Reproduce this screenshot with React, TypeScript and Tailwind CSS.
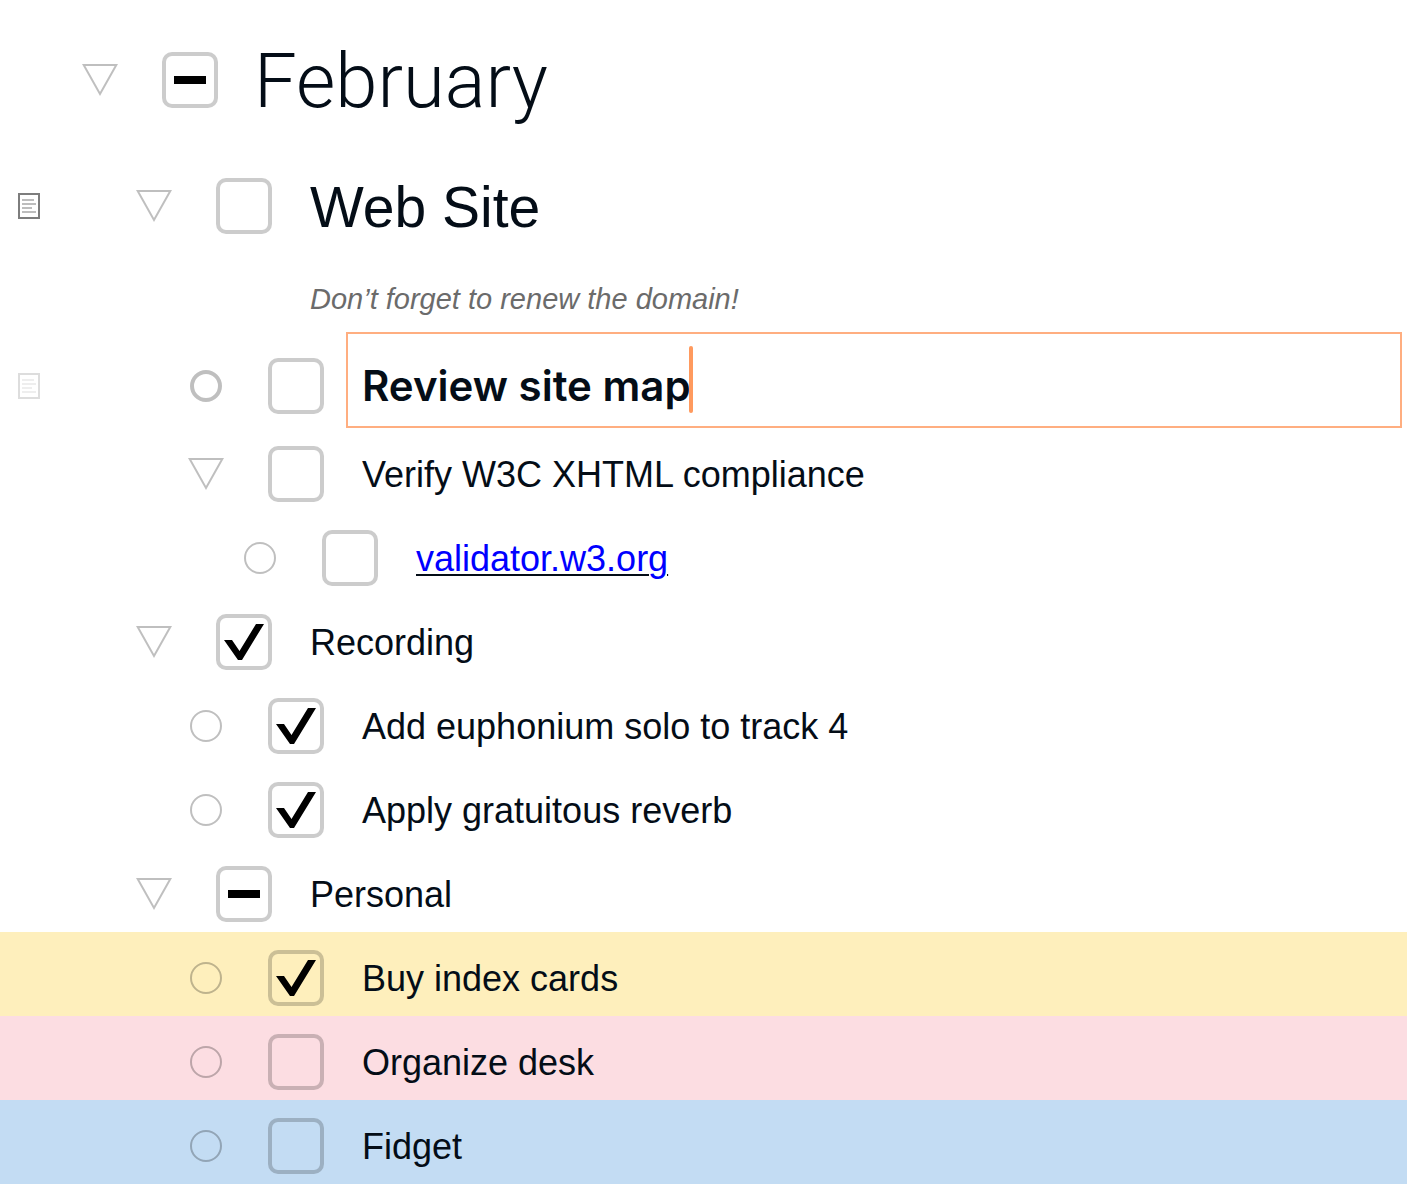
import React from "react";

type Mark = "none" | "check" | "dash";
type Bullet = "open" | "leaf" | "bold";

function NoteIcon({ faded }: { faded?: boolean }) {
  return (
    <svg
      width="22"
      height="26"
      viewBox="0 0 22 26"
      className={faded ? "opacity-25" : ""}
      fill="none"
      strokeWidth="2"
      aria-hidden="true"
    >
      <rect x="1" y="1" width="20" height="24" stroke="#7d7d7d" />
      <path d="M4 7h12M4 11h14M4 15h10M4 19h14" stroke="#bdbdbd" />
    </svg>
  );
}

function Box({ id, mark }: { id: string; mark: Mark }) {
  return (
    <span className="relative block size-14 shrink-0">
      <input
        id={id}
        type="checkbox"
        defaultChecked={mark === "check"}
        className="block size-14 appearance-none rounded-[10px] border-4 border-black/20"
      />
      {mark !== "none" && (
        <svg
          viewBox="0 0 56 56"
          className="pointer-events-none absolute inset-0 size-14"
          aria-hidden="true"
        >
          <path
            d={mark === "check" ? "M8 26h8l7.5 11L40 10h8L26 46h-4z" : "M12 24h32v8H12z"}
            fill="#000"
          />
        </svg>
      )}
    </span>
  );
}

function Handle({ kind, name }: { kind: Bullet; name: string }) {
  return (
    <button type="button" aria-label={name} className="block size-9 shrink-0">
      <svg
        viewBox="0 0 36 36"
        className="size-9"
        fill="none"
        stroke="#000"
        strokeOpacity="0.25"
        aria-hidden="true"
      >
        {kind === "open" && <path d="M1.7 3h32.6L18 32z" strokeWidth="2" />}
        {kind === "leaf" && <circle cx="18" cy="18" r="15" strokeWidth="2" />}
        {kind === "bold" && <circle cx="18" cy="18" r="14" strokeWidth="4" />}
      </svg>
    </button>
  );
}

interface RowProps {
  id: string;
  name: string;
  indent: string;
  size?: string;
  tint?: string;
  bullet: Bullet;
  mark?: Mark;
  note?: "solid" | "faded";
  children?: React.ReactNode;
}

function Row({
  id,
  name,
  indent,
  size = "h-21 pt-2",
  tint = "",
  bullet,
  mark = "none",
  note,
  children,
}: RowProps) {
  return (
    <li className={`flex items-center ${size} ${tint}`}>
      <span className="flex w-10 shrink-0 justify-end">
        {note && <NoteIcon faded={note === "faded"} />}
      </span>
      <div className={`flex min-w-0 flex-1 items-center ${indent}`}>
        <Handle kind={bullet} name={`Handle for ${name}`} />
        <span className="w-11 shrink-0" />
        <Box id={id} mark={mark} />
        {children ?? (
          <label htmlFor={id} className="ml-[38px] pt-0.5 whitespace-nowrap text-4xl">
            {name}
          </label>
        )}
      </div>
    </li>
  );
}

const level1 = "pl-[42px]";
const level2 = "pl-[96px]";
const level3 = "pl-[148px]";
const level4 = "pl-[202px]";

export default function App() {
  return (
    <main className="min-h-screen bg-white pt-8 font-['Liberation_Sans',Arial,sans-serif] text-[#040d17]">
      <ul>
        <Row id="february" name="February" indent={level1} size="h-24" bullet="open" mark="dash">
          <label
            htmlFor="february"
            className="ml-9 pt-0.5 whitespace-nowrap font-['Roboto',sans-serif] text-[76px] leading-none font-light"
          >
            February
          </label>
        </Row>
        <Row id="web-site" name="Web Site" indent={level2} size="h-35 pt-4" bullet="open" note="solid">
          <label htmlFor="web-site" className="ml-[38px] pt-0.5 whitespace-nowrap text-[57px] leading-none">
            Web Site
          </label>
        </Row>
        <li className="flex h-16 items-center pl-[310px] text-[29px] text-[#6b6b6b] italic">
          <p className="whitespace-nowrap">Don’t forget to renew the domain!</p>
        </li>
        <Row
          id="site-map"
          name="Review site map"
          indent={level3}
          size="h-24 pt-3"
          bullet="bold"
          note="faded"
        >
          <div className="-mt-3 mr-[5px] ml-[22px] flex h-24 min-w-0 flex-1 items-center border-2 border-[#ffae80] pt-2.5 pl-[14px]">
            <input
              type="text"
              aria-label="Item text"
              defaultValue="Review site map"
              className="max-w-full bg-transparent font-['Inter',sans-serif] text-[42px] leading-none font-semibold outline-none [field-sizing:content]"
            />
            <span className="-mt-3 -ml-0.5 h-[67px] w-1 shrink-0 rounded-sm bg-[#ff9a5e]" />
          </div>
        </Row>
        <Row id="xhtml" name="Verify W3C XHTML compliance" indent={level3} bullet="open" />
        <Row id="validator" name="validator.w3.org" indent={level4} bullet="leaf">
          <a
            href="#validator"
            className="ml-[38px] pt-0.5 whitespace-nowrap text-4xl text-[#0000ff] underline decoration-[#040d17] decoration-2 underline-offset-3"
          >
            validator.w3.org
          </a>
        </Row>
        <Row id="recording" name="Recording" indent={level2} bullet="open" mark="check" />
        <Row id="euphonium" name="Add euphonium solo to track 4" indent={level3} bullet="leaf" mark="check" />
        <Row id="reverb" name="Apply gratuitous reverb" indent={level3} bullet="leaf" mark="check" />
        <Row id="personal" name="Personal" indent={level2} bullet="open" mark="dash" />
        <Row id="cards" name="Buy index cards" indent={level3} tint="bg-[#feefbc]" bullet="leaf" mark="check" />
        <Row id="desk" name="Organize desk" indent={level3} tint="bg-[#fcdde2]" bullet="leaf" />
        <Row id="fidget" name="Fidget" indent={level3} tint="bg-[#c3dcf3]" bullet="leaf" />
      </ul>
    </main>
  );
}
